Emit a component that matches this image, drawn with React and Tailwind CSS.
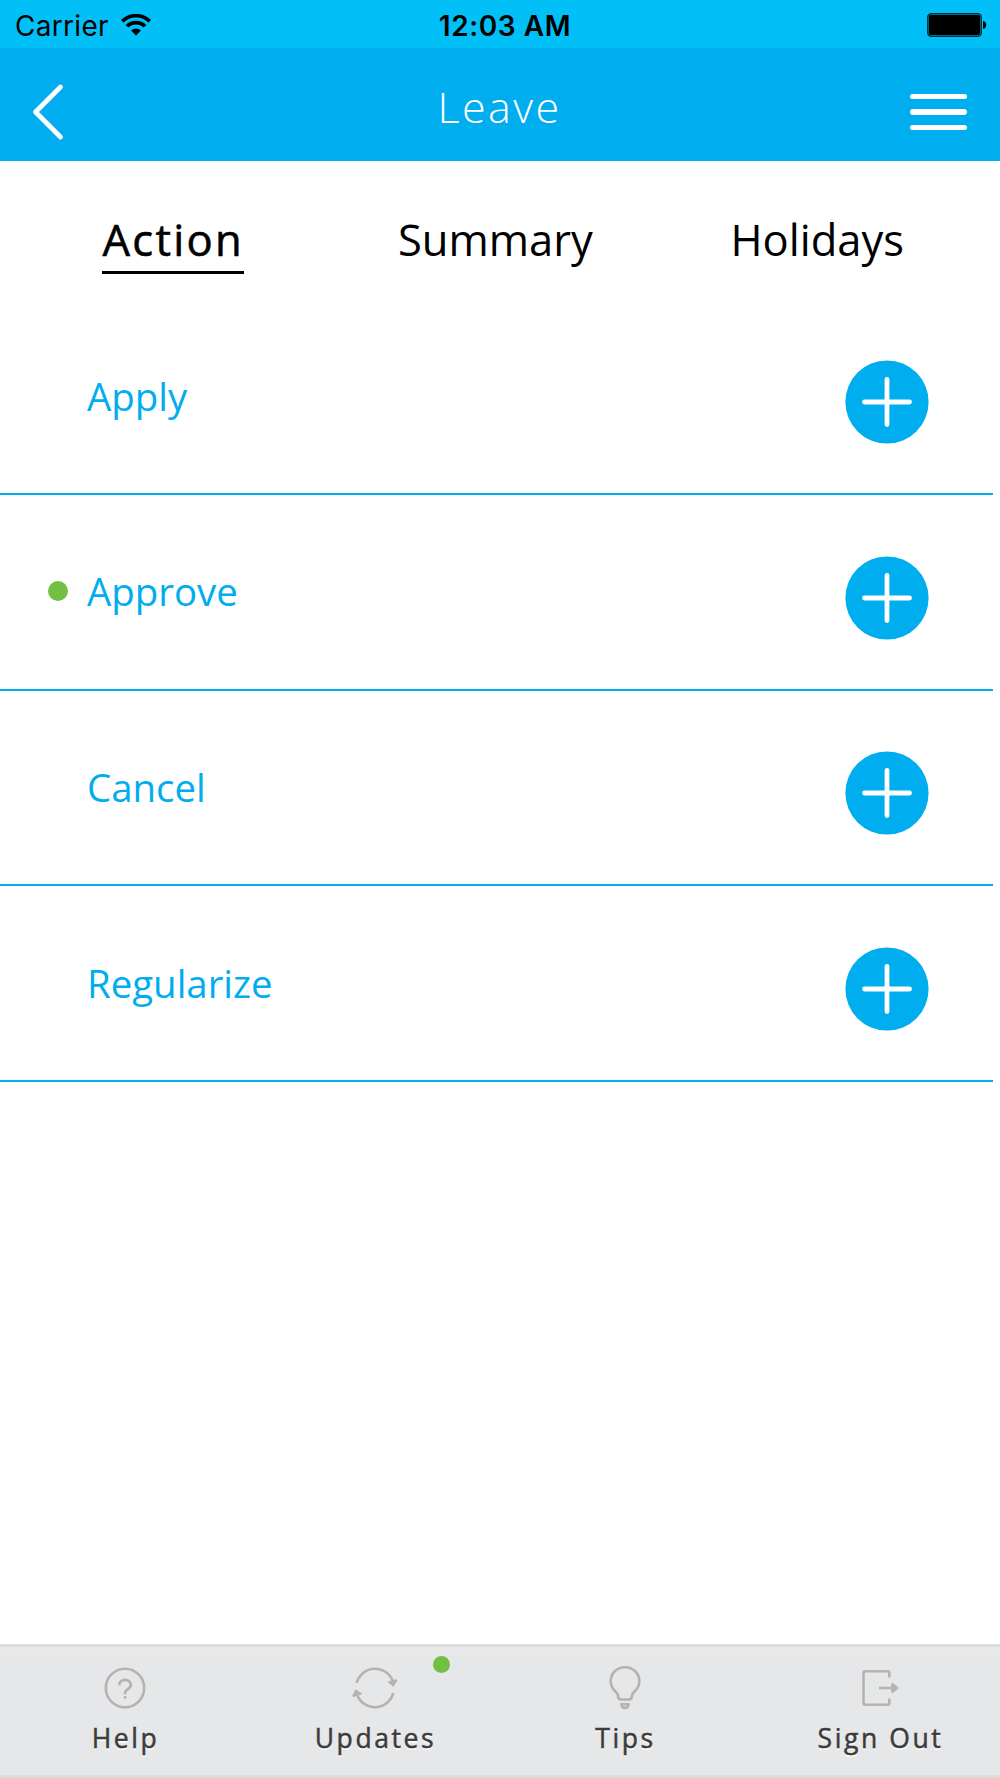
import clsx from 'clsx'

const tabs = ["Action", "Summary", "Holidays"]

const actions = [
  { name: "Apply", pending: false },
  { name: "Approve", pending: true },
  { name: "Cancel", pending: false },
  { name: "Regularize", pending: false },
]

const WifiIcon = () => (
  <svg className="mb-px ml-3 h-[22px] w-[30px]" viewBox="0 0 30 22" fill="none">
    <path d="M1.2 7.3a19.6 19.6 0 0 1 27.6 0" stroke="#000" strokeWidth="3.6" />
    <path d="M6 12.3a12.8 12.8 0 0 1 18 0" stroke="#000" strokeWidth="3.6" />
    <path d="M15 21.4l-4.9-5a7 7 0 0 1 9.8 0z" fill="#000" />
  </svg>
)

const BatteryIcon = () => (
  <svg className="mb-px h-6 w-[60px]" viewBox="0 0 60 24">
    <rect x="0.7" y="0.7" width="53.6" height="22.6" rx="3.6" fill="#007fa4" stroke="#00303e" strokeWidth="1.3" />
    <rect x="2" y="2" width="51" height="20" rx="2" fill="#000" />
    <path d="M56 8c4.4 1 4.4 7 0 8z" fill="#000" />
  </svg>
)

const PlusIcon = () => (
  <svg className="size-[84px]" viewBox="0 0 84 84">
    <circle cx="42" cy="42" r="41.6" fill="#00adef" />
    <path d="M42 19.5v45M19.5 42h45" stroke="#fff" strokeWidth="4.8" strokeLinecap="round" />
  </svg>
)

const HelpIcon = () => (
  <svg className="size-12" viewBox="0 0 48 48" fill="none" stroke="#b3b3b3" strokeWidth="2.6">
    <circle cx="24" cy="24" r="19.2" />
    <path d="M18.2 21.3c0-3.6 2.6-5.4 5.8-5.4 3.3 0 5.8 2 5.8 5.1 0 4.3-5.7 4-5.7 7.7v1.6" strokeWidth="2.8" />
    <circle cx="24.1" cy="33.5" r="1.4" fill="#b3b3b3" stroke="none" />
  </svg>
)

const UpdatesIcon = () => (
  <svg className="size-12" viewBox="0 0 48 48" fill="none" stroke="#b3b3b3" strokeWidth="2.6">
    <path d="M5.7 18.8a19 19 0 0 1 36.200-1.500" />
    <path d="M42.300 29.200a19 19 0 0 1-36.200 1.500" />
    <path d="M37 18.500l5.500 4.200 4-6.300-1.700-1.500-3.200 1.700-3.700.500z" fill="#b3b3b3" stroke="none" />
    <path d="M11 29.500l-6.500-4.200-3.400 6.700 1.700 1.200 3.200-1.700 3.700-.500z" fill="#b3b3b3" stroke="none" />
  </svg>
)

const TipsIcon = () => (
  <svg className="size-12" viewBox="0 0 48 48" fill="none" stroke="#b3b3b3" strokeWidth="2.6">
    <path d="M24 3.200c-8.200 0-14.300 6.200-14.300 14 0 5.300 2.600 8.500 5.700 11.300 1.300 1.200 1.600 2 1.600 3.400 0 2.500 1.200 3.600 3.400 3.600h7.200c2.200 0 3.400-1.100 3.400-3.600 0-1.400.300-2.200 1.600-3.400 3.100-2.800 5.700-6 5.700-11.300 0-7.800-6.100-14-14.300-14z" />
    <path d="M20.500 40.200h7c0 2.800-1.500 3.700-3.500 3.700s-3.500-.900-3.500-3.700z" />
  </svg>
)

const SignOutIcon = () => (
  <svg className="size-12" viewBox="0 0 48 48" fill="none" stroke="#b3b3b3" strokeWidth="2.6">
    <path d="M33.300 13.500V9.200q0-2-2-2H9.500q-2 0-2 2v29.600q0 2 2 2h21.800q2 0 2-2V34.500" />
    <path d="M23 24h15" />
    <path d="M36.700 18.600l6 5.400-6 5.400-1.500-1.700V20.300z" fill="#b3b3b3" stroke="none" />
  </svg>
)

const footerItems = [
  { name: "Help", Icon: HelpIcon },
  { name: "Updates", Icon: UpdatesIcon, badge: true },
  { name: "Tips", Icon: TipsIcon },
  { name: "Sign Out", Icon: SignOutIcon },
]

const StatusBar = () => (
  <div className="grid h-12 grid-cols-3 items-center bg-[#00c0f7] pt-[3px] pr-[13px] pl-[15px] font-['Inter',sans-serif] text-[28px] leading-[44px] text-black">
    <div className="flex items-center">
      <span className="tracking-[0.3px]">Carrier</span>
      <WifiIcon />
    </div>
    <span className="pl-2 text-center font-semibold tracking-[0.6px] whitespace-nowrap">12:03 AM</span>
    <div className="flex justify-end">
      <BatteryIcon />
    </div>
  </div>
)

const Header = () => (
  <header className="grid h-[113px] grid-cols-3 items-center bg-[#00adef] pr-[33px] pl-8">
    <button aria-label="Back" className="mt-[15px] justify-self-start">
      <svg className="h-[58px] w-8" viewBox="0 0 32 58" fill="none" stroke="#fff" strokeWidth="4.8" strokeLinecap="round" strokeLinejoin="round">
        <path d="M28.500 4L3.500 29l25 25" />
      </svg>
    </button>
    <h1 className="mt-1 text-center text-[43px] leading-[60px] font-light tracking-[2.4px] text-white">Leave</h1>
    <button aria-label="Menu" className="mt-[15px] flex flex-col gap-[10px] justify-self-end">
      <span className="h-[5.5px] w-[57px] rounded-full bg-white" />
      <span className="h-[5.5px] w-[57px] rounded-full bg-white" />
      <span className="h-[5.5px] w-[57px] rounded-full bg-white" />
    </button>
  </header>
)

const App = () => {
  const active = "Action"

  return (
    <div className="flex h-[1778px] w-[1000px] flex-col overflow-hidden bg-white font-['Open_Sans',sans-serif]">
      <StatusBar />
      <Header />

      <nav className="grid h-[138.5px] grid-cols-[296px_1fr_auto] items-start pt-[46px] pr-[96px] pl-[102px] text-[43.5px] leading-[64px] text-black">
        {tabs.map((tab) => (
          <button
            key={tab}
            className={clsx(
              "justify-self-start pt-px",
              tab === active && "border-b-[3px] border-black pl-[0.5px] leading-[63px] tracking-[2.3px] [-webkit-text-stroke:0.6px_black]"
            )}
          >
            {tab}
          </button>
        ))}
      </nav>

      <ul className="flex-1 pr-[7px]">
        {actions.map(({ name, pending }) => (
          <li
            key={name}
            className="flex h-[195.6px] items-start justify-between border-b-[2.5px] border-[#00adef] pt-[60.8px] pr-[64.5px] pl-12"
          >
            <div className="flex items-center pt-[9.5px]">
              <span className={clsx("mr-[19px] size-5 rounded-full", pending && "bg-[#72bf44]")} />
              <span className="text-[38.4px] leading-[52px] text-[#00adef]">{name}</span>
            </div>
            <button aria-label={name}>
              <PlusIcon />
            </button>
          </li>
        ))}
      </ul>

      <footer className="h-[134px] border-t-[3px] border-b-[3px] border-[#dcdddd] bg-[#e6e7e9]">
        <div className="grid h-full grid-cols-4 border-t-[9px] border-[#e8e8e8] pt-[7.5px]">
          {footerItems.map(({ name, Icon, badge }) => (
            <button
              key={name}
              className="relative flex flex-col items-center text-[#3c3c3c] last:pl-2.5"
            >
              <Icon />
              <span className="mt-[8px] pl-px text-[26.5px] leading-9 tracking-[2.6px] [-webkit-text-stroke:0.5px_#3c3c3c] [text-shadow:0_2px_0_#f8f8f8]">
                {name}
              </span>
              {badge && <span className="absolute top-[-7.5px] right-[50px] size-[17px] rounded-full bg-[#72bf44]" />}
            </button>
          ))}
        </div>
      </footer>
    </div>
  )
}

export default App
